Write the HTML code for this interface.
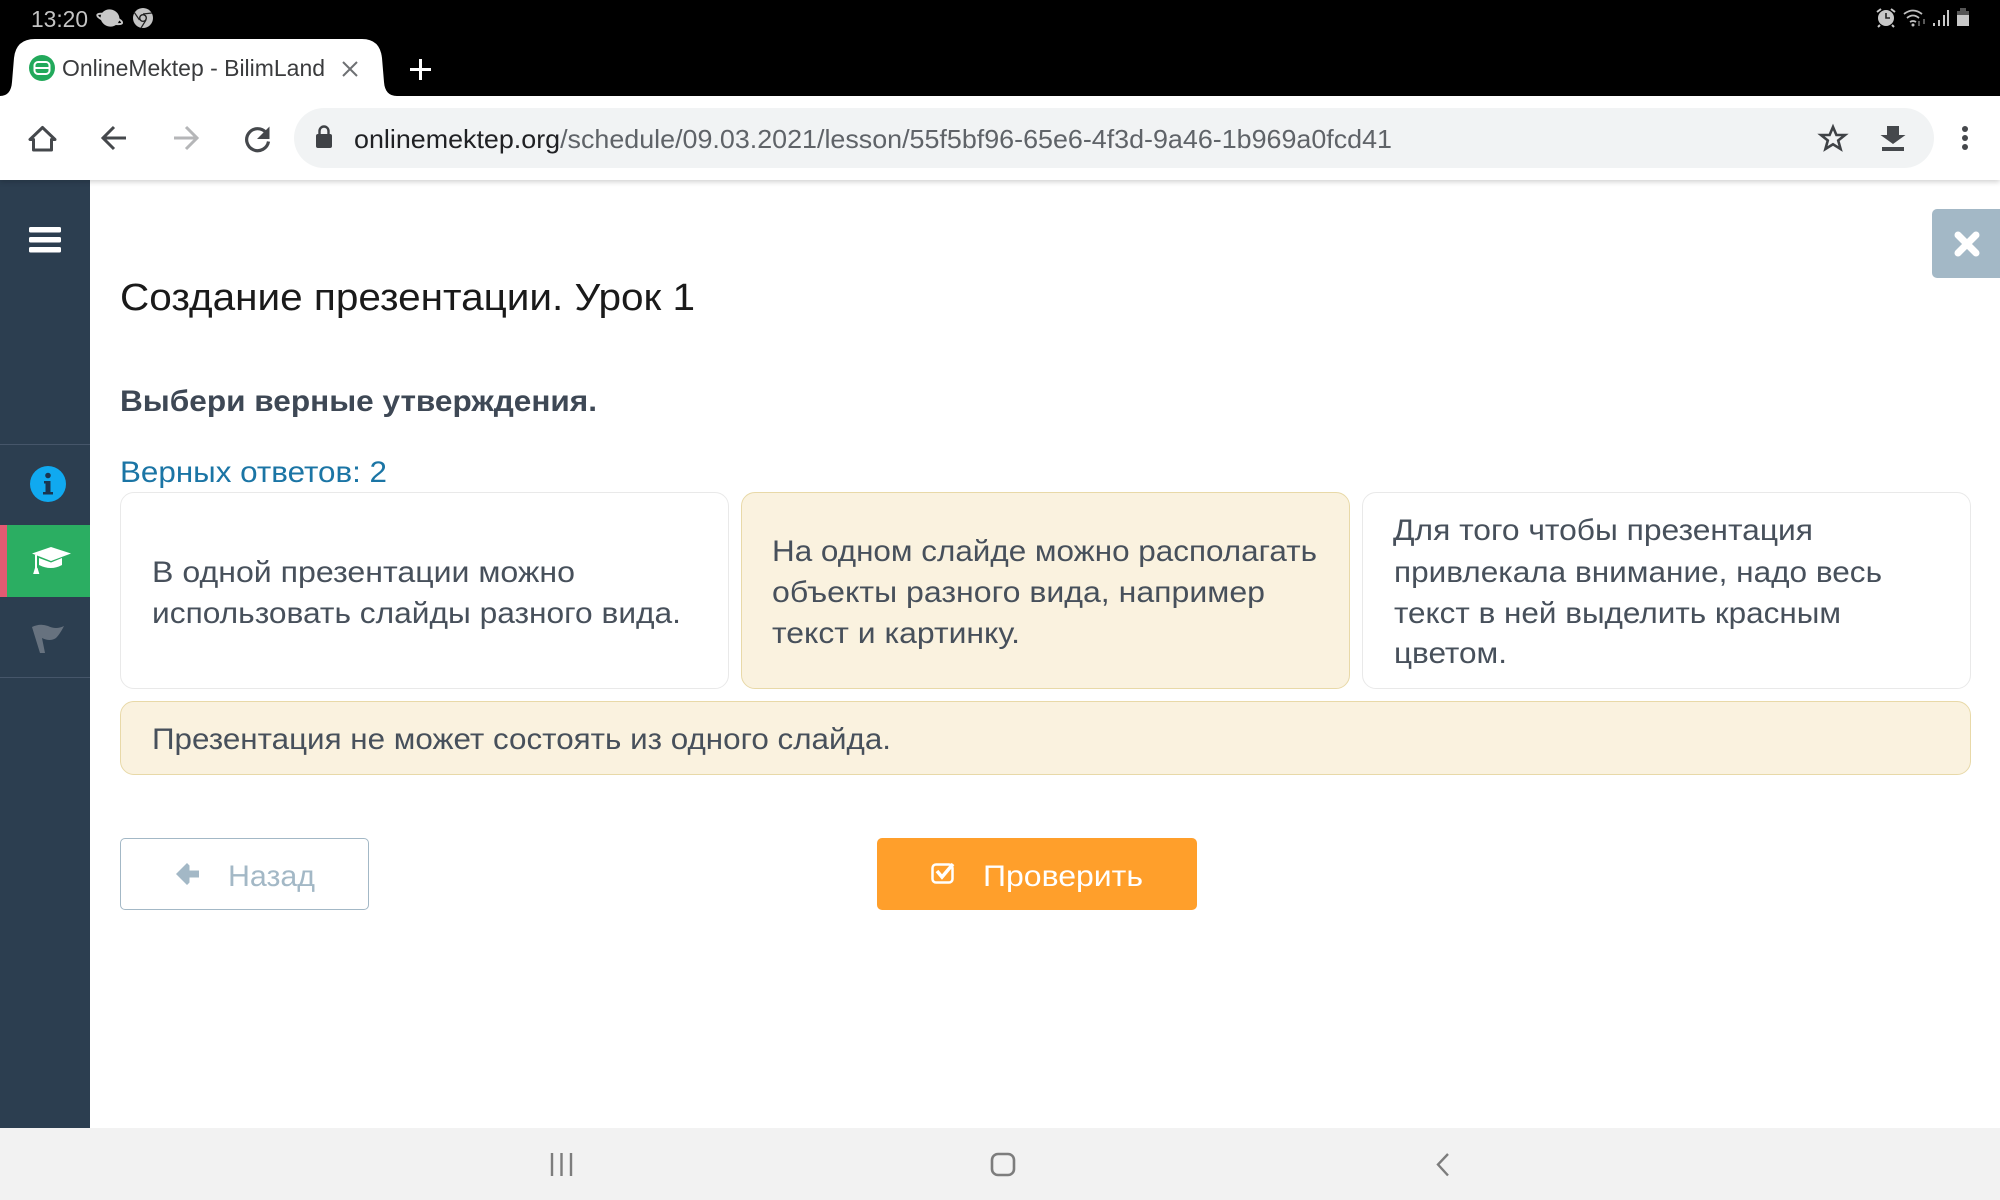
<!DOCTYPE html>
<html lang="ru">
<head>
<meta charset="utf-8">
<title>OnlineMektep - BilimLand</title>
<style>
html,body{margin:0;padding:0;width:2000px;height:1200px;overflow:hidden;background:#fff}
div{position:absolute;box-sizing:border-box}
svg{position:absolute;left:0;top:0}
text{font-family:"Liberation Sans",sans-serif}
.b{fill:#47505b;font-size:30px}
</style>
</head>
<body>
<div style="left:0;top:0;width:2000px;height:96px;background:#000"></div>
<div style="left:0;top:96px;width:2000px;height:84px;background:#fff;box-shadow:0 2px 5px rgba(0,0,0,.18);z-index:2"></div>
<div style="left:294px;top:108px;width:1640px;height:60px;background:#f1f3f4;border-radius:30px;z-index:3"></div>
<div style="left:0;top:180px;width:90px;height:948px;background:#2c3e50"></div>
<div style="left:0;top:444px;width:90px;height:1px;background:#46566a"></div>
<div style="left:0;top:677px;width:90px;height:1px;background:#46566a"></div>
<div style="left:0;top:525px;width:90px;height:72px;background:#2bae62"></div>
<div style="left:0;top:525px;width:7px;height:72px;background:#e25a72"></div>
<div style="left:1932px;top:209px;width:68px;height:69px;background:#a3b8c6;border-radius:5px 0 0 5px"></div>
<div style="left:120px;top:492px;width:609px;height:197px;background:#fff;border:1px solid #e9e9e9;border-radius:14px"></div>
<div style="left:741px;top:492px;width:609px;height:197px;background:#faf2df;border:1px solid #e8d9a8;border-radius:14px"></div>
<div style="left:1362px;top:492px;width:609px;height:197px;background:#fff;border:1px solid #e9e9e9;border-radius:14px"></div>
<div style="left:120px;top:701px;width:1851px;height:74px;background:#faf2df;border:1px solid #e8d9a8;border-radius:14px"></div>
<div style="left:120px;top:838px;width:249px;height:72px;background:#fff;border:1px solid #a3b8c6;border-radius:5px"></div>
<div style="left:877px;top:838px;width:320px;height:72px;background:#ff9f2b;border-radius:5px"></div>
<div style="left:0;top:1128px;width:2000px;height:72px;background:#f2f2f2"></div>

<svg width="2000" height="1200" viewBox="0 0 2000 1200" style="z-index:5">
<!-- status bar -->
<text x="31" y="27" font-size="23" fill="#c4c4c4" textLength="57" lengthAdjust="spacingAndGlyphs">13:20</text>
<g transform="rotate(18 110 18)"><ellipse cx="110" cy="18" rx="9.500" ry="8.500" fill="#c8c8c8"/><ellipse cx="110" cy="19" rx="13" ry="3.500" fill="none" stroke="#c8c8c8" stroke-width="2"/></g>
<circle cx="143" cy="18" r="10" fill="#c4c4c4"/><circle cx="143" cy="18" r="4" fill="#222"/><circle cx="143" cy="18" r="2.600" fill="#c4c4c4"/>
<path d="M143 14L152 13M146 20L141 28M139.500 20L134 12" stroke="#222" stroke-width="1.200" fill="none"/>
<circle cx="1886" cy="18" r="8" fill="#c8c8c8"/><path d="M1886 13v5h4" stroke="#222" stroke-width="1.600" fill="none"/><path d="M1877 12l4-3M1895 12l-4-3M1880 25l-2 2M1892 25l2 2" stroke="#c8c8c8" stroke-width="2"/>
<path d="M1904 14q9-7 18 0M1907 18q6-5 12 0M1910 22q3-2 6 0" stroke="#c0c0c0" stroke-width="1.800" fill="none"/><circle cx="1913" cy="25" r="1.500" fill="#c0c0c0"/>
<path d="M1919 21v5M1924 19v5" stroke="#888" stroke-width="1.300"/>
<path d="M1934 23v3M1939 20v6M1944 15v11M1948 10v16" stroke="#c8c8c8" stroke-width="2"/>
<rect x="1957" y="11" width="12" height="15" fill="#c8c8c8"/><rect x="1957" y="11" width="12" height="4" fill="#555"/><rect x="1960" y="8" width="6" height="3" fill="#555"/>
<!-- tab -->
<path d="M0 96q11 0 12-14l2-24q2-19 21-19h327q18 0 20 19l2 24q1 14 13 14z" fill="#fff"/>
<circle cx="42" cy="68" r="13" fill="#22a95b"/><rect x="34.500" y="62" width="15" height="12" rx="3.500" fill="none" stroke="#fff" stroke-width="2"/><path d="M35 68h14" stroke="#fff" stroke-width="2"/>
<text x="62" y="76" font-size="23" fill="#3a3b3d" textLength="263" lengthAdjust="spacingAndGlyphs">OnlineMektep - BilimLand</text>
<path d="M343 62l14 14M357 62l-14 14" stroke="#6e7073" stroke-width="2"/>
<path d="M410 69.500h21M420.500 59v21" stroke="#fff" stroke-width="3"/>
<!-- toolbar icons -->
<path d="M42.500 127.500L30 139.500h3.500V150h18v-10.500H55z" fill="none" stroke="#45484c" stroke-width="3" stroke-linejoin="round"/>
<path d="M126 138h-22M114 127l-11 11 11 11" fill="none" stroke="#45484c" stroke-width="3"/>
<path d="M174 138h22M186 127l11 11-11 11" fill="none" stroke="#b5b6b8" stroke-width="3"/>
<path d="M266 132.500a11 11 0 1 0 2.500 9" fill="none" stroke="#45484c" stroke-width="3.200"/><path d="M269.500 126.500v12.500h-12.500z" fill="#45484c"/>
<rect x="316" y="134" width="16" height="14" rx="2" fill="#3f4246"/><path d="M319.500 134v-3a4.500 4.500 0 0 1 9 0v3" fill="none" stroke="#3f4246" stroke-width="2.400"/>
<text x="354" y="148" font-size="26" textLength="1038" lengthAdjust="spacingAndGlyphs" fill="#5f6368"><tspan fill="#202124">onlinemektep.org</tspan>/schedule/09.03.2021/lesson/55f5bf96-65e6-4f3d-9a46-1b969a0fcd41</text>
<path d="M1833 127l3.400 8h8.600l-6.800 5.500 2.400 8.500-7.600-4.700-7.600 4.700 2.400-8.500-6.800-5.500h8.600z" fill="none" stroke="#3f4246" stroke-width="2.600" stroke-linejoin="miter"/>
<path d="M1887 126h12v9h6.500l-12.500 9-12.500-9h6.500zM1882 147h22v4h-22z" fill="#45484c"/>
<circle cx="1965" cy="129" r="3" fill="#45484c"/><circle cx="1965" cy="138" r="3" fill="#45484c"/><circle cx="1965" cy="147" r="3" fill="#45484c"/>
<!-- close -->
<path d="M1958 235l18 18M1976 235l-18 18" stroke="#fff" stroke-width="7" stroke-linecap="round"/>
<!-- sidebar -->
<rect x="29" y="227" width="32" height="5.500" rx="1.500" fill="#fff"/><rect x="29" y="237" width="32" height="5.500" rx="1.500" fill="#fff"/><rect x="29" y="247" width="32" height="5.500" rx="1.500" fill="#fff"/>
<circle cx="48" cy="484" r="18" fill="#10a9f0"/><circle cx="48" cy="475.500" r="2.800" fill="#1a3550"/><path d="M44 481h6.500v11h2.500v2.500h-10v-2.500h2.500v-8.500h-1.500z" fill="#1a3550"/>
<path d="M51 547l20 6.500-20 7.500-19-7.500z" fill="#fff"/><path d="M39 558l12 4.500 11-4.500v7q-11 6-23 0z" fill="#fff"/><path d="M36 555v13l-1.500 5h3.500l-1.500-5" stroke="#fff" stroke-width="2" fill="#fff"/>
<path d="M32 627q8-4 16-1 8 4 16 0-4 8-8 12-6 4-14 0l3 15-5 0z" fill="#67727f"/>
<!-- content -->
<text x="120" y="310" font-size="38" fill="#1a1a1a" textLength="575" lengthAdjust="spacingAndGlyphs">Создание презентации. Урок 1</text>
<text x="120" y="411" font-size="30" font-weight="700" fill="#3e4855" textLength="477" lengthAdjust="spacingAndGlyphs">Выбери верные утверждения.</text>
<text x="120" y="482" font-size="30" fill="#1b75a5" textLength="267" lengthAdjust="spacingAndGlyphs">Верных ответов: 2</text>
<text class="b" x="152" y="582" textLength="423" lengthAdjust="spacingAndGlyphs">В одной презентации можно</text>
<text class="b" x="152" y="623" textLength="529" lengthAdjust="spacingAndGlyphs">использовать слайды разного вида.</text>
<text class="b" x="772" y="561" textLength="545" lengthAdjust="spacingAndGlyphs">На одном слайде можно располагать</text>
<text class="b" x="772" y="602" textLength="493" lengthAdjust="spacingAndGlyphs">объекты разного вида, например</text>
<text class="b" x="772" y="643" textLength="248" lengthAdjust="spacingAndGlyphs">текст и картинку.</text>
<text class="b" x="1393" y="540" textLength="420" lengthAdjust="spacingAndGlyphs">Для того чтобы презентация</text>
<text class="b" x="1394" y="582" textLength="488" lengthAdjust="spacingAndGlyphs">привлекала внимание, надо весь</text>
<text class="b" x="1394" y="623" textLength="447" lengthAdjust="spacingAndGlyphs">текст в ней выделить красным</text>
<text class="b" x="1394" y="663" textLength="113" lengthAdjust="spacingAndGlyphs">цветом.</text>
<text class="b" x="152" y="749" textLength="739" lengthAdjust="spacingAndGlyphs">Презентация не может состоять из одного слайда.</text>
<!-- buttons -->
<path d="M187 863l-11 11 11 11 2.500-2.500v-5h9.500v-7h-9.500v-5z" fill="#a3b8c6"/>
<text x="228" y="886" font-size="30" fill="#a3b8c6" textLength="87" lengthAdjust="spacingAndGlyphs">Назад</text>
<rect x="932.500" y="864.500" width="20" height="18" rx="3.500" fill="none" stroke="#fff" stroke-width="2.500"/>
<path d="M937 871l5 6 11-13" fill="none" stroke="#fff" stroke-width="3.500"/>
<text x="983" y="886" font-size="30" fill="#fff" textLength="160" lengthAdjust="spacingAndGlyphs">Проверить</text>
<!-- nav -->
<path d="M552 1153v23M561.500 1153v23M571 1153v23" stroke="#7d7d7d" stroke-width="2.400"/>
<rect x="992" y="1154" width="22" height="21" rx="6" fill="none" stroke="#7d7d7d" stroke-width="2.600"/>
<path d="M1448 1154l-10 10.500 10 11" fill="none" stroke="#7d7d7d" stroke-width="2.400"/>
</svg>
</body>
</html>
